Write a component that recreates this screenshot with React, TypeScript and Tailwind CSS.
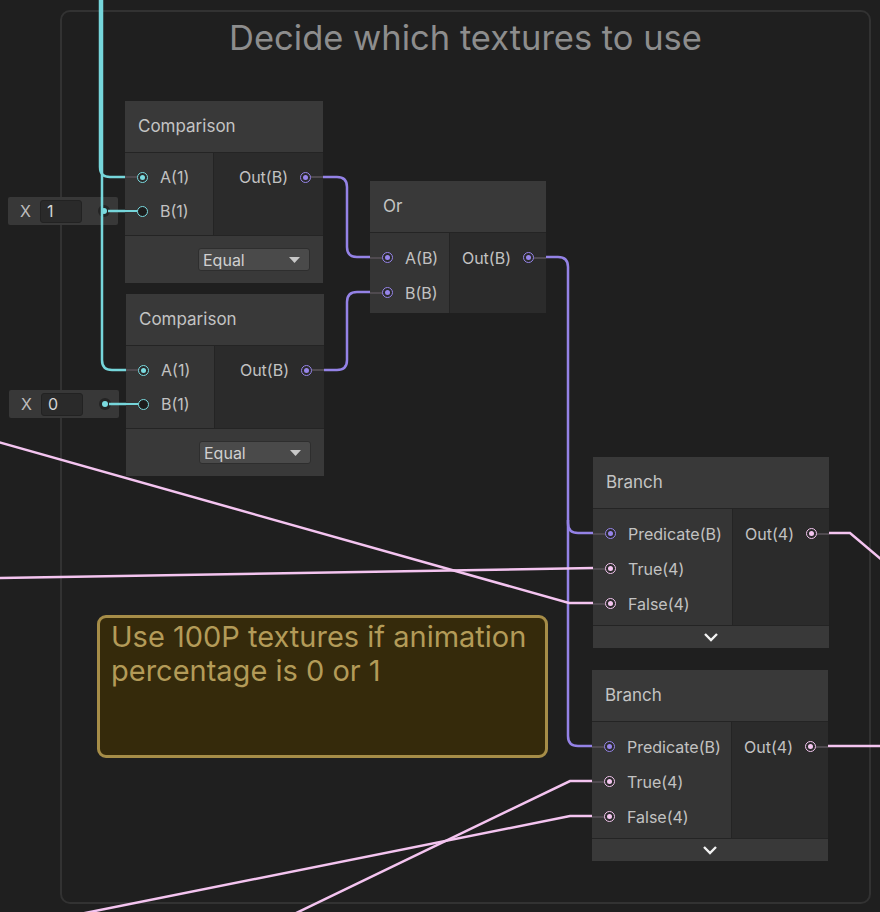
import type { ReactNode } from "react";

type Kind = "float" | "bool" | "vec4";

const ring: Record<Kind, string> = {
  float: "border-[#7bdbe0]",
  bool: "border-[#9785ea]",
  vec4: "border-[#f4c6f0]",
};

const fill: Record<Kind, string> = {
  float: "bg-[#7bdbe0]",
  bool: "bg-[#9785ea]",
  vec4: "bg-[#f4c6f0]",
};

type Slot = { label: string; kind: Kind; open?: boolean; stub?: string };

const Socket = ({ kind, open }: { kind: Kind; open?: boolean }) => (
  <span
    className={`relative flex h-[11px] w-[11px] shrink-0 items-center justify-center rounded-full border-[1.5px] ${ring[kind]} ${
      open ? "bg-[#1c1c1c]" : "bg-[#2a2a2a]"
    }`}
  >
    {!open && <span className={`h-[5px] w-[5px] rounded-full ${fill[kind]}`} />}
  </span>
);

const Dropdown = () => (
  <div className="flex h-[47px] justify-end bg-[#393939] pr-[13px] pt-[12px]">
    <div className="flex h-[23px] w-[112px] items-center justify-between rounded-[3px] border border-[#2e2e2e] bg-[#4a4a4a] pl-[4px] pr-[9px] text-[16px] text-[#d0d0d0]">
      Equal
      <svg width="11" height="6" viewBox="0 0 11 6">
        <path d="M0 0H11L5.5 6Z" fill="#c8c8c8" />
      </svg>
    </div>
  </div>
);

const Collapse = () => (
  <div className="flex h-[22px] items-center justify-center bg-[#393939]">
    <svg width="18" height="10" viewBox="0 0 18 10">
      <path d="M3 2l6 6 6-6" fill="none" stroke="#f2f2f2" strokeWidth="2.4" />
    </svg>
  </div>
);

const Node = ({
  className,
  title,
  leftW,
  portsH,
  rowH,
  inputs,
  output,
  footer,
}: {
  className: string;
  title: string;
  leftW: string;
  portsH: string;
  rowH: string;
  inputs: Slot[];
  output: Slot;
  footer: ReactNode;
}) => (
  <div className={`absolute flex flex-col gap-px bg-[#242424] ${className}`}>
    <div className="flex h-[51px] items-center bg-[#393939] px-[13px] text-[17px] text-[#c4c4c4]">{title}</div>
    <div className={`flex gap-px ${portsH}`}>
      <div className={`bg-[#353535] pt-[7px] ${leftW}`}>
        {inputs.map((p) => (
          <div key={p.label} className={`relative flex items-center pl-[12px] ${rowH}`}>
            <span
              className={`absolute left-0 top-1/2 h-[2px] w-[13px] -translate-y-1/2 ${p.stub ?? "bg-[#4f4a4f]"}`}
            />
            <Socket kind={p.kind} open={p.open} />
            <span className="ml-[12px] text-[16px] text-[#c2c2c2]">{p.label}</span>
          </div>
        ))}
      </div>
      <div className="flex-1 bg-[#2b2b2b] pt-[7px]">
        <div className={`relative flex items-center justify-end pr-[12px] ${rowH}`}>
          <span className="text-[16px] text-[#c2c2c2]">{output.label}</span>
          <span className="ml-[12px]">
            <Socket kind={output.kind} />
          </span>
          <span className="absolute right-0 top-1/2 h-[2px] w-[12px] -translate-y-1/2 bg-[#4f4a4f]" />
        </div>
      </div>
    </div>
    {footer}
  </div>
);

const Field = ({ className, value }: { className: string; value: string }) => (
  <div className={`absolute flex h-[28px] w-[110px] items-center rounded-[2px] bg-[#383838] pl-[12px] ${className}`}>
    <span className="text-[16px] text-[#bdbdbd]">X</span>
    <span className="ml-[9px] flex h-[23px] w-[42px] items-center rounded-[3px] border border-[#222222] bg-[#2a2a2a] pl-[6px] text-[16px] text-[#d4d4d4]">
      {value}
    </span>
    <span className="ml-auto mr-[8px] flex h-[12px] w-[12px] items-center justify-center rounded-full bg-[#242424]">
      <span className="h-[6px] w-[6px] rounded-full bg-[#7bdbe0]" />
    </span>
  </div>
);

const CYAN = "#76d6db";
const PURPLE = "#9482e6";
const PINK = "#f4c4f0";

const Wires = () => (
  <svg className="absolute inset-0" width="880" height="912" fill="none" strokeWidth="2.5">
    <path d="M100 0V167Q100 177 110 177H126" stroke={CYAN} />
    <path d="M102 0V360Q102 370 112 370H127" stroke={CYAN} />
    <path d="M108 211H130" stroke={CYAN} />
    <path d="M109 404H130" stroke={CYAN} />

    <path d="M311 177H337Q347 177 347 187V247Q347 257 357 257H371" stroke={PURPLE} />
    <path d="M312 370H337Q347 370 347 360V302Q347 292 357 292H371" stroke={PURPLE} />
    <path d="M535 257H558Q568 257 568 267V523Q568 533 578 533H594" stroke={PURPLE} />
    <path d="M568 520V736Q568 746 578 746H593" stroke={PURPLE} />

    <path d="M818 533H850L882 560" stroke={PINK} />
    <path d="M816 746H882" stroke={PINK} />
    <path d="M-2 442L569 603H594" stroke={PINK} />
    <path d="M-2 578L594 568" stroke={PINK} />
    <path d="M593 781H570L290 916" stroke={PINK} />
    <path d="M593 816H570L70 916" stroke={PINK} />
  </svg>
);

export default function App() {
  return (
    <div className="relative h-[912px] w-[880px] overflow-hidden bg-[#1f1f1f] font-['Inter',sans-serif]">
      <div className="absolute left-[60px] top-[10px] h-[894px] w-[811px] rounded-[10px] border-2 border-[#323232]">
        <div className="pt-[5px] text-center text-[34.5px] leading-[42px] text-[#8d8d8d]">Decide which textures to use</div>
      </div>

      <Field className="left-[8px] top-[197px]" value="1" />
      <Field className="left-[9px] top-[390px]" value="0" />

      <Wires />

      <Node
        className="left-[125px] top-[101px] w-[198px]"
        title="Comparison"
        leftW="w-[88px]"
        portsH="h-[82px]"
        rowH="h-[34px]"
        inputs={[
          { label: "A(1)", kind: "float" },
          { label: "B(1)", kind: "float", open: true, stub: "bg-[#76d6db]" },
        ]}
        output={{ label: "Out(B)", kind: "bool" }}
        footer={<Dropdown />}
      />
      <Node
        className="left-[126px] top-[294px] w-[198px]"
        title="Comparison"
        leftW="w-[88px]"
        portsH="h-[82px]"
        rowH="h-[34px]"
        inputs={[
          { label: "A(1)", kind: "float" },
          { label: "B(1)", kind: "float", open: true, stub: "bg-[#76d6db]" },
        ]}
        output={{ label: "Out(B)", kind: "bool" }}
        footer={<Dropdown />}
      />
      <Node
        className="left-[370px] top-[181px] w-[176px]"
        title="Or"
        leftW="w-[79px]"
        portsH="h-[80px]"
        rowH="h-[35px]"
        inputs={[
          { label: "A(B)", kind: "bool" },
          { label: "B(B)", kind: "bool" },
        ]}
        output={{ label: "Out(B)", kind: "bool" }}
        footer={null}
      />
      <Node
        className="left-[593px] top-[457px] w-[236px]"
        title="Branch"
        leftW="w-[139px]"
        portsH="h-[116px]"
        rowH="h-[35px]"
        inputs={[
          { label: "Predicate(B)", kind: "bool" },
          { label: "True(4)", kind: "vec4" },
          { label: "False(4)", kind: "vec4" },
        ]}
        output={{ label: "Out(4)", kind: "vec4" }}
        footer={<Collapse />}
      />
      <Node
        className="left-[592px] top-[670px] w-[236px]"
        title="Branch"
        leftW="w-[139px]"
        portsH="h-[116px]"
        rowH="h-[35px]"
        inputs={[
          { label: "Predicate(B)", kind: "bool" },
          { label: "True(4)", kind: "vec4" },
          { label: "False(4)", kind: "vec4" },
        ]}
        output={{ label: "Out(4)", kind: "vec4" }}
        footer={<Collapse />}
      />

      <div className="absolute left-[97px] top-[615px] h-[143px] w-[451px] rounded-[9px] border-[3px] border-[#a68d48] bg-[#352a0b] px-[11px] pt-[2px] text-[29px] leading-[34px] text-[#b39b58]">
        Use 100P textures if animation percentage is 0 or 1
      </div>
    </div>
  );
}
